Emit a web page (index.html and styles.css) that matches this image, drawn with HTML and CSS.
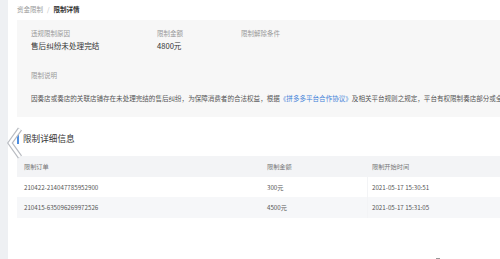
FILE: index.html
```html
<!DOCTYPE html>
<html lang="zh">
<head>
<meta charset="utf-8">
<link rel="stylesheet" href="styles.css">
</head>
<body>
<div class="side"></div>
<main class="main">
  <div class="crumb"><span class="crumb-parent">资金限制</span><span class="sep">/</span><span class="crumb-cur">限制详情</span></div>
  <section class="info">
    <div class="info-row">
      <div class="field f1"><div class="label">违规限制原因</div><div class="value">售后纠纷未处理完结</div></div>
      <div class="field f2"><div class="label">限制金额</div><div class="value">4800元</div></div>
      <div class="field f3"><div class="label">限制解除条件</div></div>
    </div>
    <div class="label desc-label">限制说明</div>
    <p class="desc">因奏店或奏店的关联店铺存在未处理完结的售后纠纷，为保障消费者的合法权益，根据<a class="link">《拼多多平台合作协议》</a>及相关平台规则之规定，平台有权限制奏店部分或全部资金。</p>
  </section>
  <h2 class="title">限制详细信息</h2>
  <div class="table">
    <div class="tr th"><div class="c1">限制订单</div><div class="c2">限制金额</div><div class="c3">限制开始时间</div></div>
    <div class="tr"><div class="c1">210422-214047785952900</div><div class="c2">300元</div><div class="c3">2021-05-17 15:30:51</div></div>
    <div class="tr alt"><div class="c1">210415-635096269972526</div><div class="c2">4500元</div><div class="c3">2021-05-17 15:31:05</div></div>
  </div>
  <div class="marks"><span class="dot"></span><span class="dot up"></span><span class="dot"></span></div>
</main>
<svg class="chev" width="16" height="32" viewBox="0 0 16 32"><polyline points="13,2 3,16 13,30" fill="none" stroke="#b9bcc2" stroke-width="5" stroke-linejoin="miter"/><polyline points="13,2 3,16 13,30" fill="none" stroke="#ffffff" stroke-width="2.6"/></svg>
</body>
</html>
```
FILE: styles.css
```css
html, body { margin: 0; padding: 0; }
body {
  width: 500px; height: 259px; overflow: hidden;
  background: #fff;
  font-family: "Noto Sans CJK SC", "Noto Sans", sans-serif;
  display: flex;
  position: relative;
}
.side { width: 8px; flex: none; background: #eef0f3; }
.main { flex: none; width: 492px; padding-left: 9px; box-sizing: border-box; overflow: hidden; }
.crumb { height: 20px; display: flex; align-items: center; font-size: 6.5px; color: #999; padding-bottom: 2px; box-sizing: border-box; }
.sep { margin: 0 4px; color: #bbb; }
.crumb-cur { color: #333; font-weight: bold; }
.info { background: #f7f7f7; padding: 9px 0 0 14px; height: 97px; box-sizing: border-box; }
.info-row { display: flex; }
.field.f1 { width: 126px; }
.field.f2 { width: 84px; }
.label { font-size: 6.5px; color: #999; line-height: 9px; }
.value { font-size: 7.6px; color: #333; line-height: 10px; margin-top: 3px; }
.desc-label { margin-top: 20px; }
.desc { margin: 14px 0 0; font-size: 6.55px; color: #555; white-space: nowrap; line-height: 9px; overflow: hidden; }
.link { color: #3f7fd8; }
.title { margin: 15px 0 0; font-size: 8.6px; font-weight: normal; color: #333; line-height: 12px; border-left: 2px solid #4e8ee0; padding-left: 4px; }
.table { margin-top: 12px; font-size: 6.2px; color: #555; }
.tr { display: flex; height: 20px; align-items: center; }
.tr.th { height: 21px; background: #f3f4f6; color: #777; }
.tr.alt { height: 21px; background: #f6f7f9; }
.tr > div { padding-left: 7px; box-sizing: border-box; height: 100%; display: flex; align-items: center; }
.c1 { width: 243px; flex: none; }
.c2 { width: 108px; flex: none; border-right: 1px solid #f3f4f6; }
.c3 { flex: 1; padding-left: 4px !important; }
.marks { display: flex; gap: 24px; margin: 40px 0 0 393px; align-items: flex-end; }
.dot { width: 2px; height: 1px; background: #aaa; }
.dot.up { width: 4px; height: 3px; background: #999; }
.chev { position: absolute; left: 7px; top: 127px; }
```
